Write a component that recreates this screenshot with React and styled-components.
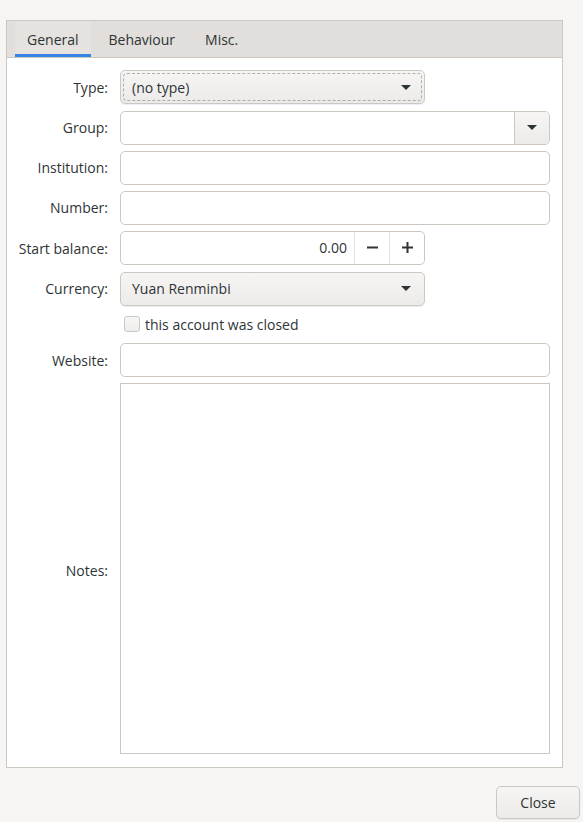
import React from "react";
import styled, { createGlobalStyle } from "styled-components";

const Global = createGlobalStyle`
  html, body { margin: 0; padding: 0; background: #f6f5f4; }
  body { font-family: "Open Sans", "Noto Sans", sans-serif; font-size: 14px; color: #2e3436; }
  * { box-sizing: border-box; }
`;

const Window = styled.div`
  width: 583px;
  height: 822px;
  background: #f6f5f4;
  display: flex;
  flex-direction: column;
  padding: 20px 3px 0 6px;
`;

const Notebook = styled.div`
  width: 557px;
  height: 748px;
  border: 1px solid #cdc7c2;
  background: #ffffff;
  display: flex;
  flex-direction: column;
`;

const TabBar = styled.div`
  height: 37px;
  background: #e1dedb;
  border-bottom: 1px solid #cdc7c2;
  display: flex;
  gap: 6px;
  padding-left: 8px;
`;

const Tab = styled.div`
  height: 36px;
  padding: 0 12px;
  display: flex;
  align-items: center;
  color: #2e3436;
  background: ${(p) => (p.$active ? "#e5e2df" : "transparent")};
  box-shadow: ${(p) => (p.$active ? "inset 0 -3px 0 #3584e4" : "none")};
`;

const Form = styled.div`
  flex: 1;
  display: grid;
  grid-template-columns: 89px 1fr;
  grid-template-rows: 34.7px 34px 34px 34px 35px 34px 25.5px 34px 1fr;
  column-gap: 12px;
  row-gap: 6px;
  padding: 12px 12px 13px 12px;
`;

const Label = styled.div`
  justify-self: end;
  align-self: center;
  white-space: nowrap;
  color: #2e3436;
  padding-top: ${(p) => p.$shift || "0"};
`;

const Combo = styled.div`
  width: 305px;
  height: 34px;
  align-self: start;
  border: 1px solid #cdc7c2;
  border-radius: 5px;
  background: linear-gradient(#f6f5f4, #edebe9);
  box-shadow: 0 1px 1px rgba(0, 0, 0, 0.07);
  display: flex;
  align-items: center;
  justify-content: space-between;
  padding: 0 13px 0 11px;
  position: relative;
  color: #2e3436;
  &::after {
    content: "";
    display: ${(p) => (p.$focus ? "block" : "none")};
    position: absolute;
    inset: 2px;
    border: 1px dashed rgba(46, 52, 54, 0.35);
    border-radius: 4px;
  }
`;

const Arrow = styled.span`
  width: 0;
  height: 0;
  border-left: 5px solid transparent;
  border-right: 5px solid transparent;
  border-top: 5px solid #2e3436;
`;

const Entry = styled.div`
  height: ${(p) => p.$h || "34px"};
  align-self: start;
  border: 1px solid #cdc7c2;
  border-radius: ${(p) => (p.$square ? "0" : "5px")};
  background: #ffffff;
  display: flex;
  align-items: stretch;
  overflow: hidden;
`;

const EntryFill = styled.div`
  flex: 1;
  display: flex;
  align-items: center;
  justify-content: flex-end;
  padding: 0 7px;
  color: #2e3436;
`;

const DropButton = styled.div`
  width: 35px;
  border-left: 1px solid #cdc7c2;
  background: linear-gradient(#f6f5f4, #edebe9);
  display: flex;
  align-items: center;
  justify-content: center;
`;

const SpinButton = styled.div`
  width: 35px;
  border-left: 1px solid #e6e3e0;
  display: flex;
  align-items: center;
  justify-content: center;
  color: #2e3436;
`;

const SpinEntry = styled(Entry)`
  width: 305px;
`;

const CheckRow = styled.label`
  display: flex;
  align-items: center;
  gap: 5px;
  padding-left: 4px;
  color: #2e3436;
`;

const Check = styled.span`
  width: 16px;
  height: 16px;
  border: 1px solid #cdc7c2;
  border-radius: 3px;
  background: linear-gradient(#f8f7f6, #efedec);
`;

const Footer = styled.div`
  display: flex;
  justify-content: flex-end;
  padding-top: 18px;
`;

const Button = styled.div`
  width: 84px;
  height: 33px;
  border: 1px solid #cdc7c2;
  border-radius: 5px;
  background: linear-gradient(#f6f5f4, #edebe9);
  box-shadow: 0 1px 1px rgba(0, 0, 0, 0.07);
  display: flex;
  align-items: center;
  justify-content: center;
  color: #2e3436;
`;

const Minus = () => (
  <svg width="11" height="11" viewBox="0 0 11 11">
    <rect x="0" y="4.5" width="11" height="2" fill="#2e3436" />
  </svg>
);

const Plus = () => (
  <svg width="11" height="11" viewBox="0 0 11 11">
    <rect x="0" y="4.5" width="11" height="2" fill="#2e3436" />
    <rect x="4.5" y="0" width="2" height="11" fill="#2e3436" />
  </svg>
);

export default function App() {
  return (
    <>
      <Global />
      <Window>
        <Notebook>
          <TabBar>
            <Tab $active>General</Tab>
            <Tab>Behaviour</Tab>
            <Tab>Misc.</Tab>
          </TabBar>
          <Form>
            <Label>Type:</Label>
            <Combo $focus>
              <span>(no type)</span>
              <Arrow />
            </Combo>

            <Label>Group:</Label>
            <Entry>
              <EntryFill />
              <DropButton>
                <Arrow />
              </DropButton>
            </Entry>

            <Label>Institution:</Label>
            <Entry />

            <Label>Number:</Label>
            <Entry />

            <Label>Start balance:</Label>
            <SpinEntry>
              <EntryFill>0.00</EntryFill>
              <SpinButton>
                <Minus />
              </SpinButton>
              <SpinButton>
                <Plus />
              </SpinButton>
            </SpinEntry>

            <Label>Currency:</Label>
            <Combo>
              <span>Yuan Renminbi</span>
              <Arrow />
            </Combo>

            <span />
            <CheckRow>
              <Check />
              this account was closed
            </CheckRow>

            <Label>Website:</Label>
            <Entry />

            <Label $shift="3px">Notes:</Label>
            <Entry $square $h="100%" />
          </Form>
        </Notebook>
        <Footer>
          <Button>Close</Button>
        </Footer>
      </Window>
    </>
  );
}
